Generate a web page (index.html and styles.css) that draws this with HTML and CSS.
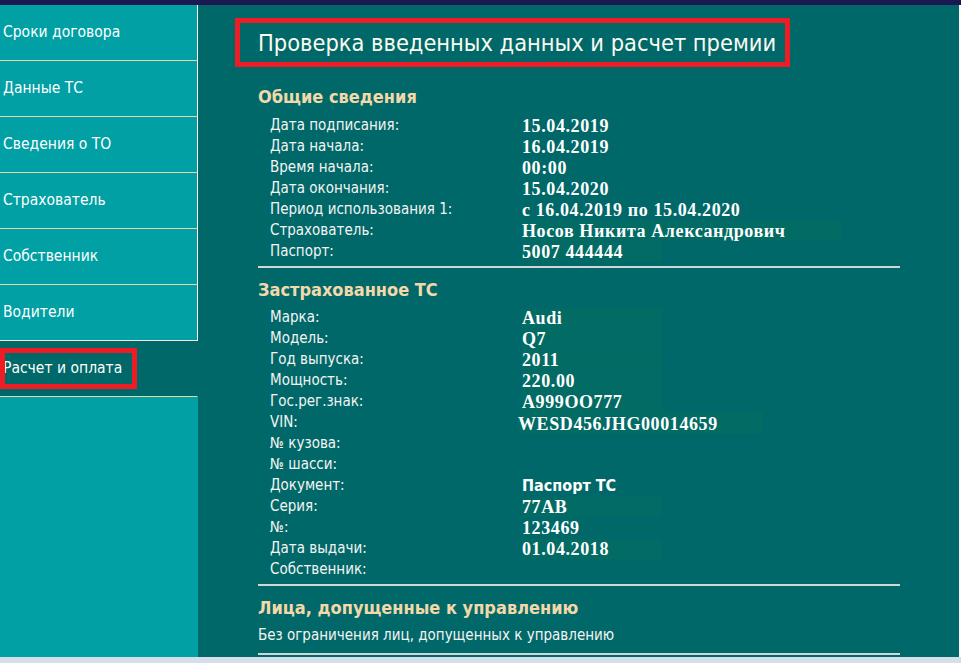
FILE: index.html
```html
<!DOCTYPE html>
<html lang="ru">
<head>
<meta charset="utf-8">
<title>Проверка введенных данных и расчет премии</title>
<link rel="stylesheet" href="styles.css">
</head>
<body>
<div class="topbar"></div>
<div class="layout">
  <nav class="sidebar">
    <div class="nav-item">Сроки договора</div>
    <div class="nav-item">Данные ТС</div>
    <div class="nav-item">Сведения о ТО</div>
    <div class="nav-item">Страхователь</div>
    <div class="nav-item">Собственник</div>
    <div class="nav-item nav-last">Водители</div>
    <div class="nav-item nav-active">Расчет и оплата<span class="mark mark-nav"></span></div>
    <div class="nav-fill"></div>
  </nav>
  <main class="main">
    <h1 class="title">Проверка введенных данных и расчет премии<span class="mark mark-title"></span></h1>

    <h2 class="section">Общие сведения</h2>
    <div class="rows">
      <div class="label">Дата подписания:</div><div class="value">15.04.2019</div>
      <div class="label">Дата начала:</div><div class="value">16.04.2019</div>
      <div class="label">Время начала:</div><div class="value">00:00</div>
      <div class="label">Дата окончания:</div><div class="value">15.04.2020</div>
      <div class="label">Период использования 1:</div><div class="value">с 16.04.2019 по 15.04.2020</div>
      <div class="label">Страхователь:</div><div class="value"><span class="box box-wide">Носов Никита Александрович</span></div>
      <div class="label">Паспорт:</div><div class="value"><span class="box">5007 444444</span></div>
    </div>
    <hr class="divider">

    <h2 class="section">Застрахованное ТС</h2>
    <div class="rows">
      <div class="label">Марка:</div><div class="value"><span class="box">Audi</span></div>
      <div class="label">Модель:</div><div class="value"><span class="box">Q7</span></div>
      <div class="label">Год выпуска:</div><div class="value"><span class="box">2011</span></div>
      <div class="label">Мощность:</div><div class="value"><span class="box">220.00</span></div>
      <div class="label">Гос.рег.знак:</div><div class="value"><span class="box">A999OO777</span></div>
      <div class="label">VIN:</div><div class="value"><span class="box box-vin">WESD456JHG00014659</span></div>
      <div class="label">№ кузова:</div><div class="value"></div>
      <div class="label">№ шасси:</div><div class="value"></div>
      <div class="label">Документ:</div><div class="value value-sans">Паспорт ТС</div>
      <div class="label">Серия:</div><div class="value"><span class="box">77AB</span></div>
      <div class="label">№:</div><div class="value">123469</div>
      <div class="label">Дата выдачи:</div><div class="value"><span class="box">01.04.2018</span></div>
      <div class="label">Собственник:</div><div class="value"></div>
    </div>
    <hr class="divider">

    <h2 class="section">Лица, допущенные к управлению</h2>
    <p class="note">Без ограничения лиц, допущенных к управлению</p>
    <hr class="divider">
  </main>
</div>
</body>
</html>
```

FILE: styles.css
```css
html, body {
  margin: 0;
  padding: 0;
}

body {
  width: 961px;
  height: 663px;
  overflow: hidden;
  background: #d5dfe9;
  font-family: "DejaVu Sans Condensed", "DejaVu Sans", sans-serif;
  font-stretch: condensed;
  color: #f4f4f4;
}

.topbar {
  height: 5px;
  background: #1a1850;
}

.layout {
  display: flex;
  height: 652px;
}

.sidebar {
  width: 198px;
  flex: none;
  display: flex;
  flex-direction: column;
  background: #00a0a4;
}

.nav-item {
  position: relative;
  height: 55px;
  box-sizing: content-box;
  display: flex;
  align-items: center;
  padding-left: 3px;
  padding-bottom: 1px;
  height: 54px;
  font-size: 15.5px;
  color: #ffffff;
  border-bottom: 1px solid #e8d6a4;
  border-right: 1px solid #ffffff;
}

.nav-last {
  border-bottom-color: #f2ecd8;
}

.nav-active {
  background: #006868;
  border-right-color: #006868;
}

.nav-fill {
  flex: 1;
}

.mark {
  position: absolute;
  border: 5px solid #ee1c24;
  pointer-events: none;
}

.mark-nav {
  left: 0;
  top: 7px;
  width: 127px;
  height: 31px;
}

.main {
  flex: 1;
  background: #006868;
  border-right: 2px solid #ffffff;
  padding: 24px 0 0 60px;
  box-sizing: border-box;
}

.title {
  position: relative;
  margin: 0;
  font-size: 23.4px;
  line-height: 28px;
  font-weight: normal;
  color: #fbfbf2;
  display: inline-block;
}

.mark-title {
  left: -23px;
  top: -11px;
  width: 545px;
  height: 39px;
}

.section {
  margin: 29px 0 7px;
  font-size: 18px;
  line-height: 22px;
  font-weight: bold;
  color: #f3d9aa;
}

.divider + .section {
  margin-top: 11px;
  margin-bottom: 6px;
}

.rows {
  display: grid;
  grid-template-columns: 252px auto;
  grid-auto-rows: 21px;
  padding-left: 12px;
  align-items: center;
}

.label {
  font-size: 15px;
  line-height: 19px;
}

.value {
  font-family: "Liberation Serif", serif;
  font-weight: bold;
  font-size: 18px;
  letter-spacing: 0.6px;
  line-height: 20px;
  color: #ffffff;
}

.value-sans {
  font-family: "DejaVu Sans Condensed", "DejaVu Sans", sans-serif;
  font-size: 16px;
  letter-spacing: 0;
}

.box {
  display: inline-block;
  width: 140px;
  background: #016b64;
  white-space: nowrap;
}

.box-wide {
  width: 320px;
}

.box-vin {
  width: 245px;
  margin-left: -4px;
  padding-top: 2px;
}

.divider {
  width: 642px;
  margin: 4px 0 0;
  border: 0;
  border-top: 2px solid #d2d6d6;
  height: 0;
}

.note {
  margin: 0 0 8px;
  font-size: 15px;
  line-height: 20px;
}
```
